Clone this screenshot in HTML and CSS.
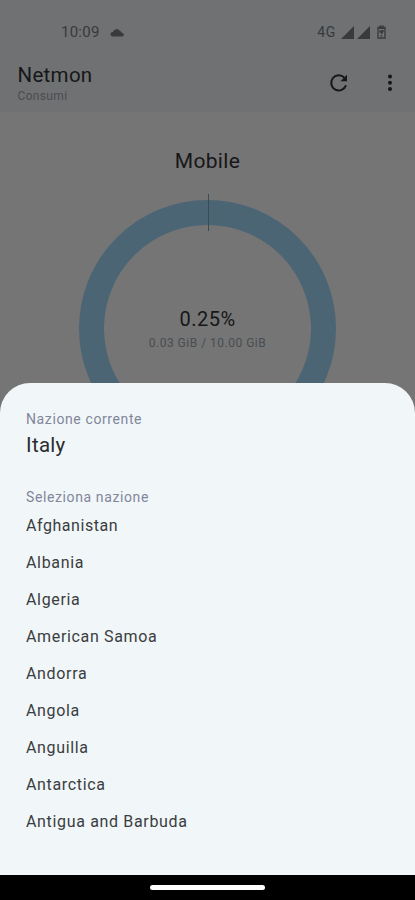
FILE: index.html
```html
<!DOCTYPE html>
<html lang="it">
<head>
<meta charset="utf-8">
<title>Netmon</title>
<link rel="stylesheet" href="styles.css">
</head>
<body>
<div class="phone">
  <div class="page">
    <header class="top">
      <div class="status">
        <span class="clock">10:09</span>
        <svg class="cloud" width="15" height="9" viewBox="0 0 15 9"><path d="M2.5 8.5A2.2 2.2 0 0 1 2.9 4 3.9 3.9 0 0 1 10 3 2.8 2.8 0 0 1 12 5 1.8 1.8 0 0 1 12.6 8.5Z"/></svg>
        <span class="network">4G</span>
        <svg class="signal" width="13" height="13" viewBox="0 0 13 13"><path d="M0 13 13 0V13Z"/></svg>
        <svg class="signal" width="13" height="13" viewBox="0 0 13 13"><path d="M0 13 13 0V13Z"/></svg>
        <svg class="battery" width="9" height="14" viewBox="0 0 9 14"><path class="shell" d="M3 1.2H6V2.3H8V13H1V2.3H3Z"/><path d="M1 2H8V4H1ZM2.3 5.5H4.5L5.5 4.5 7 6 5 9H3.8V7.5H2.3ZM3.6 10H5.2V11.6H3.6Z"/></svg>
      </div>
      <div class="bar">
        <div class="titles">
          <h1>Netmon</h1>
          <p>Consumi</p>
        </div>
        <svg class="refresh" width="20" height="20" viewBox="0 0 20 20"><path class="arc" d="M17 12.2A7.6 7.6 0 1 1 15.3 4.6"/><path d="M18 1.7V8.2H11.5Z"/></svg>
        <svg class="more" width="6" height="18" viewBox="0 0 6 18"><circle cx="3" cy="2.4" r="2"/><circle cx="3" cy="8.7" r="2"/><circle cx="3" cy="15" r="2"/></svg>
      </div>
    </header>
    <main class="usage">
      <h2>Mobile</h2>
      <div class="gauge">
        <p class="percent">0.25%</p>
        <p class="amount">0.03 GiB / 10.00 GiB</p>
      </div>
    </main>
  </div>
  <section class="sheet">
    <p class="label">Nazione corrente</p>
    <p class="current">Italy</p>
    <p class="label">Seleziona nazione</p>
    <ul class="countries">
      <li>Afghanistan</li>
      <li>Albania</li>
      <li>Algeria</li>
      <li>American Samoa</li>
      <li>Andorra</li>
      <li>Angola</li>
      <li>Anguilla</li>
      <li>Antarctica</li>
      <li>Antigua and Barbuda</li>
    </ul>
  </section>
  <div class="nav"><span class="handle"></span></div>
</div>
</body>
</html>
```
FILE: styles.css
```css
* { box-sizing: border-box; margin: 0; padding: 0; }
body { font-family: Roboto, "Liberation Sans", sans-serif; background: #000; }
svg { display: block; flex: none; fill: currentColor; }
h1, h2 { font-weight: 400; }
.phone { width: 415px; height: 900px; display: flex; flex-direction: column; overflow: hidden; }
.page { height: 413px; flex: none; overflow: hidden; background: #757575; color: #161718; }
.top { height: 112px; background: #6f7173; }
.status { height: 52px; padding: 12px 29px 0 61px; display: flex; align-items: center; color: #383a3c; }
.clock { font-size: 15px; letter-spacing: .25px; }
.cloud { margin-left: 10px; }
.network { margin-left: auto; margin-right: 5px; font-size: 14px; letter-spacing: .7px; }
.signal { margin-right: 3px; }
.battery { margin-left: 4px; }
.shell { fill: none; stroke: currentColor; stroke-width: 1.3; }
.bar { display: flex; align-items: flex-start; padding: 11px 22px 0 17.5px; }
.titles { flex: 1; }
.titles h1 { font-size: 20.5px; line-height: 25px; letter-spacing: .3px; }
.titles p { font-size: 12px; line-height: 17px; letter-spacing: .35px; color: #4a4c4e; }
.refresh { margin: 10px 38px 0 0; }
.arc { fill: none; stroke: currentColor; stroke-width: 2; }
.more { margin-top: 11px; }
.usage { display: flex; flex-direction: column; align-items: center; padding-top: 36px; }
.usage h2 { font-size: 21px; line-height: 26px; letter-spacing: .3px; }
.gauge { position: relative; width: 257px; height: 257px; margin-top: 26px; padding-top: 82px; border: 25.5px solid #4b6575; border-radius: 50%; text-align: center; white-space: nowrap; }
.gauge::before { content: ""; position: absolute; left: 104px; top: -31px; width: 1px; height: 37px; background: #3b4c56; }
.percent { font-size: 20px; line-height: 25px; letter-spacing: .5px; }
.amount { font-size: 12px; line-height: 22px; letter-spacing: .5px; color: #484d52; }
.sheet { position: relative; flex: 1; margin-top: -30px; padding: 26px 26px 0; border-radius: 30px 30px 0 0; background: #f1f6f9; color: #3a3d40; }
.label { font-size: 14px; line-height: 20px; letter-spacing: .61px; color: #81869a; }
.current { font-size: 20.5px; line-height: 32px; margin-bottom: 26px; letter-spacing: .3px; color: #2a2c2f; }
.countries { list-style: none; }
.countries li { font-size: 16px; line-height: 37px; letter-spacing: .66px; }
.countries li:first-child { letter-spacing: .55px; }
.nav { height: 25px; flex: none; display: flex; justify-content: center; align-items: center; background: #000; }
.handle { width: 115px; height: 5px; border-radius: 3px; background: #fff; }
```
